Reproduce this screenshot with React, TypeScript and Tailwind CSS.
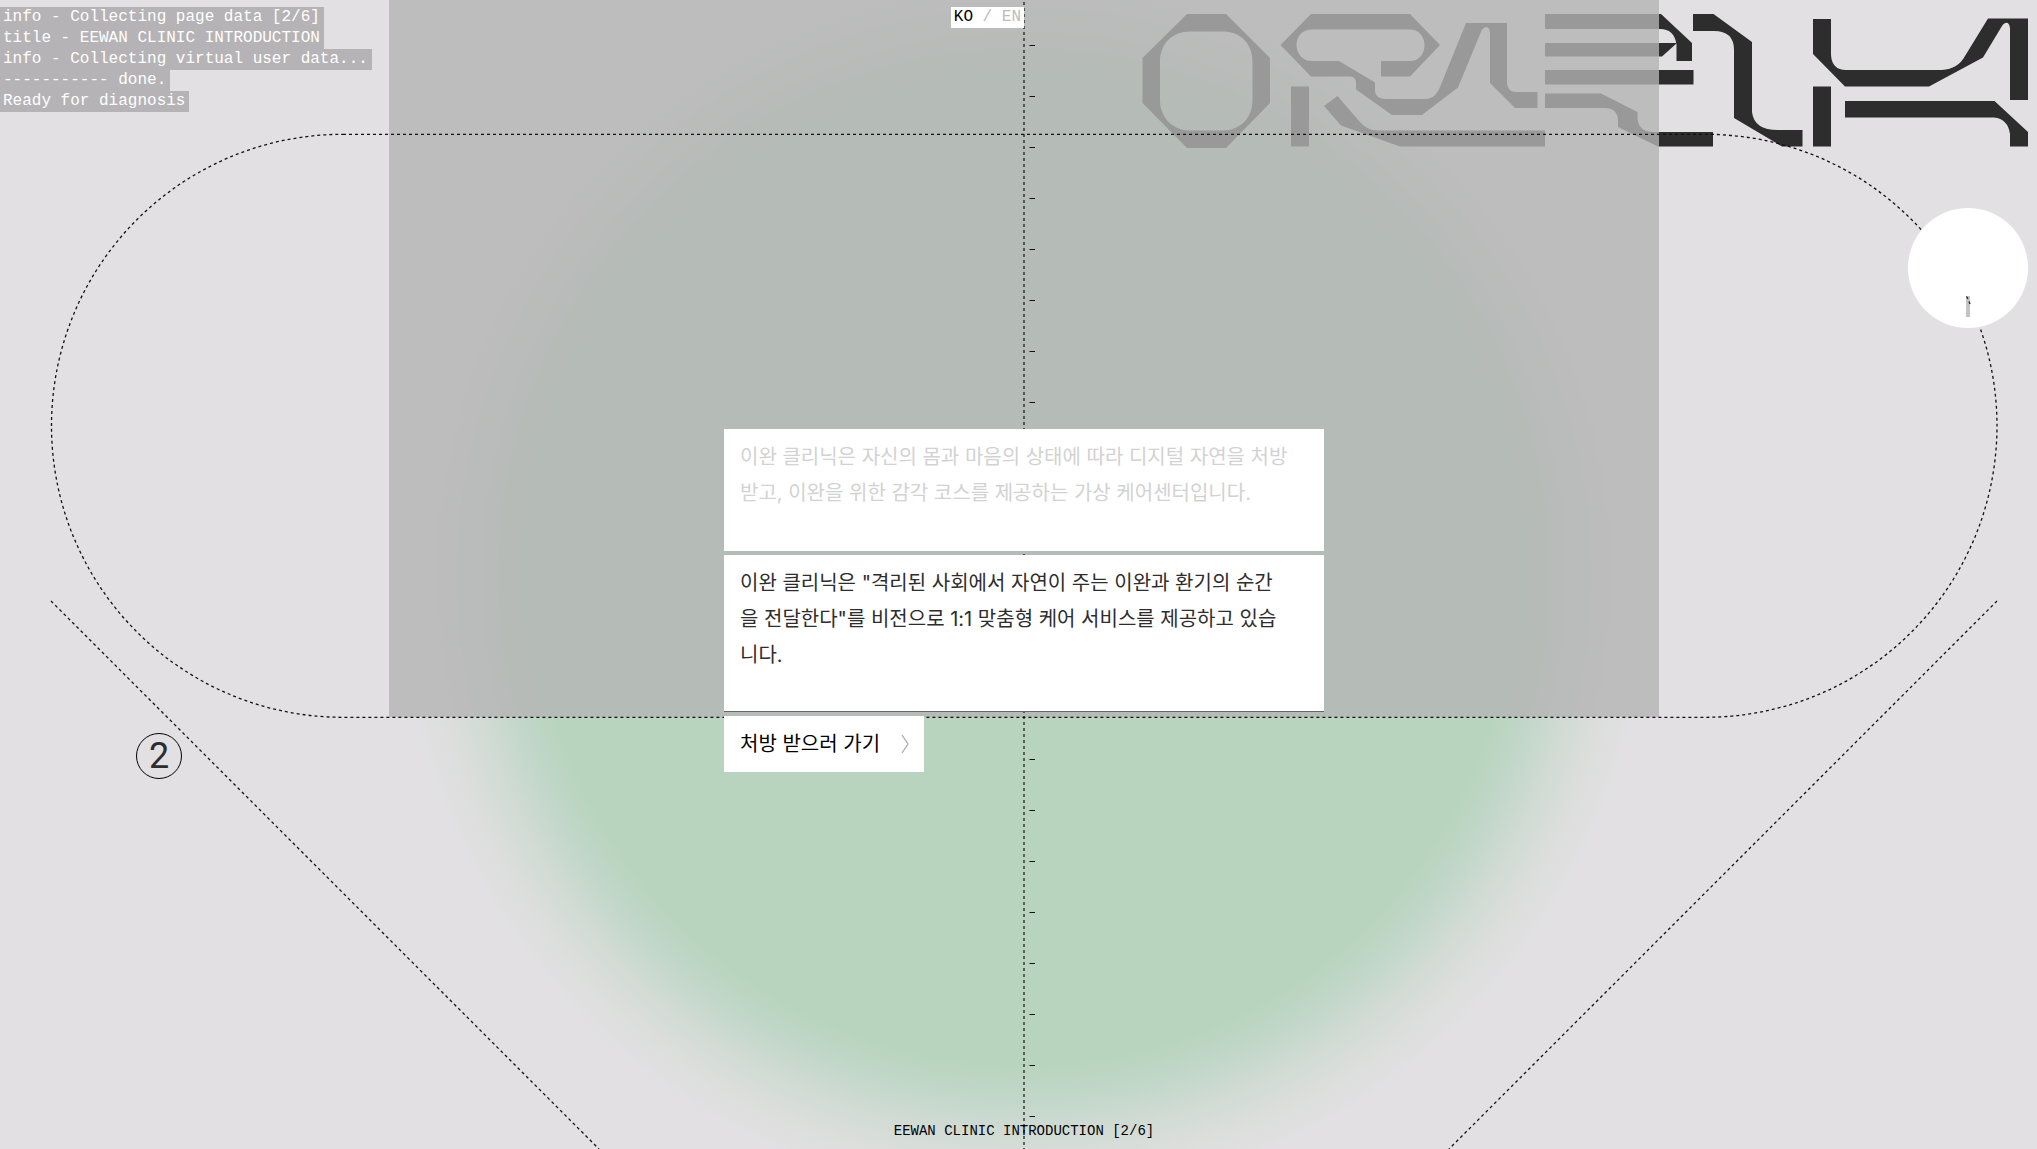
const INK = '#2d2d2d';

const logLines = [
  'info - Collecting page data [2/6]',
  'title - EEWAN CLINIC INTRODUCTION',
  'info - Collecting virtual user data...',
  '----------- done.',
  'Ready for diagnosis',
];

const ticks = Array.from({ length: 22 }, (_, i) => 45 + i * 51);

function Wordmark() {
  return (
    <svg
      className="h-[134px] w-[886px]"
      viewBox="1142 14 886 134"
      fill={INK}
      role="img"
      aria-label="EEWAN wordmark"
    >
      <path
        fillRule="evenodd"
        d="M1187 14H1226L1270 58V103L1226 148H1187L1142.500 103V58ZM1190 31.500C1173 31.500 1160 43 1160 62V100C1160 118 1173 130.500 1190 130.500H1223C1240 130.500 1252.500 118 1252.500 100V62C1252.500 43 1240 31.500 1223 31.500Z"
      />
      <path d="M1311 14H1410L1440 45L1410 76.500H1381V61H1410C1420 61 1424.500 53 1424.500 45C1424.500 37 1419 29.500 1410 29.500H1312C1302 29.500 1296.500 37 1296.500 45C1296.500 53 1302 61 1312 61H1339L1375 82.500V90C1375 96 1379 99 1386 99H1425C1433 99 1437 94 1440 87L1466 23H1507V82C1507 88 1510 92 1516 92H1537.500V108H1515L1490 83V33C1490 25 1483 25 1480.500 33L1458 87.500L1422 115H1392L1356 89.500V83C1356 79 1354 76.500 1349 76.500H1311L1280.500 45Z" />
      <path d="M1291 86.500H1309V146.500H1291Z" />
      <path d="M1324 106L1337.500 96L1359 121Q1367 130.500 1377 130.500H1545V146.500H1400L1341 125.500Z" />
      <path d="M1545 14H1661L1692 43V61H1676.500V44Q1674 29 1660 29H1545Z" />
      <path d="M1545 43H1677L1662 56.500H1545Z" />
      <path d="M1545 70H1693.500V84.500H1545Z" />
      <path d="M1545 93.500H1601L1637.500 112V119Q1639 132 1654 132H1713V146.500H1658L1618 127V120Q1617 108 1605 108H1545Z" />
      <path d="M1693 14H1713.500L1752 42V112Q1754 130 1778 130H1802.500V146.500H1782L1734 118V50Q1734 31 1714 31H1693Z" />
      <path d="M1813 19H1831V55Q1832 70 1846 70H1942Q1958 69 1965 56L1988 18.500H2028V100H2010V28C2009 21 2005 22 2002 26L1983 57.500L1929 86.500H1845L1813 54Z" />
      <path d="M1813 86.500H1831V146.500H1813Z" />
      <path d="M1845 101H1994.500L2028 132V146.500H2010V134Q2008 119 1994 117.500H1845Z" />
    </svg>
  );
}

function DashedLines() {
  return (
    <svg
      className="pointer-events-none absolute top-0 left-1/2 z-10 h-[1149px] w-[2048px] -translate-x-1/2"
      viewBox="0 0 2048 1149"
      fill="none"
      stroke="#111"
      aria-hidden="true"
    >
      <g strokeWidth="1.300" strokeDasharray="3 3">
        <rect x="51.500" y="134.300" width="1945.500" height="583" rx="291.500" />
        <path d="M51 601L599 1149" />
        <path d="M1997 601L1449 1149" />
      </g>
      <path d="M1024 2V1149" strokeWidth="2" strokeDasharray="3 3" strokeOpacity="0.6" />
      {ticks.map((y) => (
        <path key={y} d={`M1029.500 ${y + 0.5}h5.500`} />
      ))}
    </svg>
  );
}

export default function App() {
  return (
    <div className="h-screen overflow-hidden bg-[#e2e0e3] font-['Liberation_Mono',monospace]">
      <div className="relative flex h-full w-[calc(100%+11px)] flex-col bg-[radial-gradient(circle_at_50%_50%,#b8d4be_0px,#b8d4be_490px,#c2d7c9_525px,#d1dbd4_560px,#dcdedc_592px,#e2e0e3_632px)]">
        <div className="absolute inset-x-0 top-0 z-10 mx-auto h-[717px] w-[1270px] bg-[#b4b4b4]/80" />
        <DashedLines />

        <header className="grid grid-cols-2">
          <div className="z-20 flex items-start justify-between pt-[7px]">
            <ul className="flex flex-col items-start text-base leading-[21px] text-white">
              {logLines.map((line) => (
                <li key={line} className="bg-[#b5b3b5] pr-1 pl-[3px] whitespace-pre">
                  {line}
                </li>
              ))}
            </ul>
            <nav
              aria-label="Language"
              className="bg-white px-[3px] text-base leading-[21px] whitespace-pre text-[#bbb]"
            >
              <a href="#ko" className="text-black">KO</a>
              {' / '}
              <a href="#en">EN</a>
            </nav>
          </div>
          <div className="flex flex-col items-end gap-[60px] pt-[14px] pr-5">
            <Wordmark />
            <div className="z-20 size-[120px] rounded-full bg-white">
              <svg viewBox="0 0 120 120" className="size-full" aria-hidden="true">
                <path d="M58 88h4v21h-4z" fill="#c4c4c4" />
                <path d="M58.500 88.500l1.500 2.500M61 93.500l1 2.500" stroke="#222" strokeWidth="1.300" />
              </svg>
            </div>
          </div>
        </header>

        <div className="z-20 grid grid-cols-[1fr_600px_1fr] items-end pt-[101px]">
          <span className="ml-[136px] flex size-[46px] items-center justify-center rounded-full border border-black font-['Roboto',sans-serif] text-4xl text-[#2d2d2d]">
            2
          </span>
          <main className="flex flex-col items-start gap-1 pb-[7px] font-['Inter','Noto_Sans_CJK_KR',sans-serif] text-xl leading-9 text-[#2d2d2d]">
            <p className="w-full bg-white pt-[10px] pr-8 pb-10 pl-4 break-all text-[#d2d2d2]">
              이완 클리닉은 자신의 몸과 마음의 상태에 따라 디지털 자연을 처방받고, 이완을 위한 감각 코스를 제공하는 가상 케어센터입니다.
            </p>
            <p className="w-full border-b border-[#666] bg-white pt-[10px] pr-10 pb-[38px] pl-4 break-all">
              이완 클리닉은 "격리된 사회에서 자연이 주는 이완과 환기의 순간을 전달한다"를 비전으로 1:1 맞춤형 케어 서비스를 제공하고 있습니다.
            </p>
            <button
              type="button"
              className="flex w-[200px] items-center justify-between bg-white py-[10px] pr-[14px] pl-4 text-black"
            >
              처방 받으러 가기
              <svg viewBox="0 0 10 20" className="h-5 w-[10px]" fill="none" stroke="#aaa" strokeWidth="1.300" aria-hidden="true">
                <path d="M2 1L8 10L2 19" />
              </svg>
            </button>
          </main>
        </div>

        <footer className="z-20 mt-auto pb-2 text-center text-sm text-black">
          EEWAN CLINIC INTRODUCTION [2/6]
        </footer>
      </div>
    </div>
  );
}
